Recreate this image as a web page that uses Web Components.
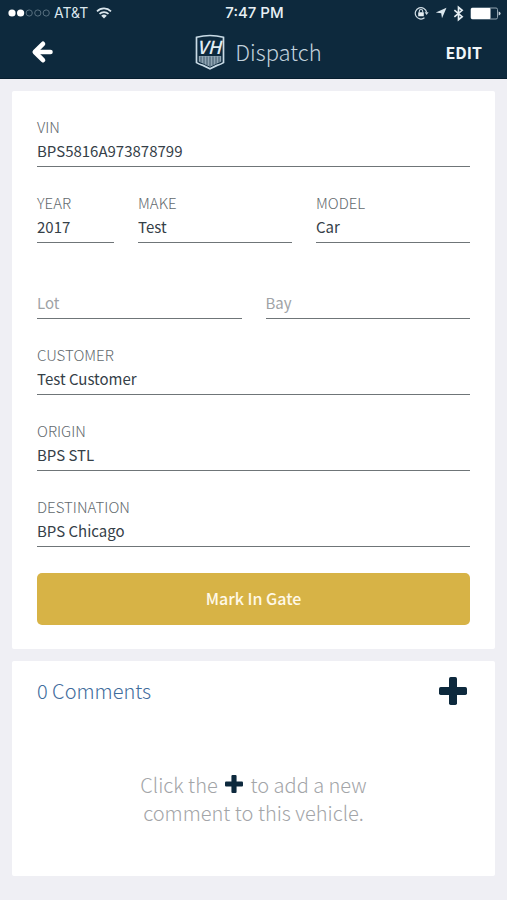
<!DOCTYPE html>
<html lang="en">
<head>
<meta charset="utf-8">
<meta name="viewport" content="width=device-width, initial-scale=1">
<title>Dispatch</title>
<style>
  html { background: #efeff4; }
  body {
    margin: 0;
    font-family: "Noto Sans CJK SC", "Noto Sans", sans-serif;
    --navy: #0d293d;
    --ink: #354048;
    --muted: #62696d;
    --gold: #d7b346;
  }
</style>
</head>
<body>
<dispatch-page></dispatch-page>

<template id="status-bar">
  <style>
    :host { display: grid; grid-template-columns: 1fr auto 1fr; align-items: center; height: 26px; padding: 0 6px 0 8px;
      font: 500 14px/26px Inter, "Liberation Sans", sans-serif; color: #dbe7ee; }
    .side { display: flex; align-items: center; gap: 4px; }
    .end { justify-content: flex-end; gap: 6px; }
    .carrier { font-size: 14px; font-weight: 400; }
    .time { font-size: 15px; font-weight: 500; color: #e8f0f5; }
    svg { display: block; }
  </style>
  <div class="side">
    <svg width="42" height="10" viewBox="0 0 42 10" aria-hidden="true">
      <g fill="#fff"><circle cx="4" cy="5" r="3.6"/><circle cx="12.6" cy="5" r="3.6"/></g>
      <g fill="none" stroke="#587080" stroke-width="1"><circle cx="21.2" cy="5" r="3.1"/><circle cx="29.8" cy="5" r="3.1"/><circle cx="38.2" cy="5" r="3.1"/></g>
    </svg>
    <span class="carrier">AT&amp;T</span>
    <svg width="24" height="12" viewBox="-4 0 24 12" fill="none" stroke="#dbe7ee" stroke-width="1.7" aria-hidden="true">
      <path d="M1 4.3a10 10 0 0 1 14 0M3.5 6.9a6.4 6.4 0 0 1 9 0"/><path fill="#dbe7ee" stroke="none" d="M8 11.6 5.2 8.8a4 4 0 0 1 5.6 0z"/>
    </svg>
  </div>
  <span class="time">7:47 PM</span>
  <div class="side end">
    <svg width="15" height="14" viewBox="0 0 15 14" fill="none" stroke="#cfdce4" aria-hidden="true">
      <path stroke-width="1.2" d="M10.5 11.8A5.7 5.7 0 1 1 12.6 6.4"/><path fill="#cfdce4" stroke="none" d="M10.6 6.2h4l-2 2.8z"/>
      <rect x="4.2" y="6.3" width="5.6" height="3.9" rx=".5" fill="#e6eef3" stroke="none"/><path stroke-width="1.1" d="M5.3 6.5V5.2a1.7 1.7 0 0 1 3.4 0v1.3"/>
    </svg>
    <svg width="12" height="12" viewBox="0 0 12 12" fill="#dbe7ee" aria-hidden="true"><path d="M11.5.8 7 11.2 6.2 6.2.8 5.6z"/></svg>
    <svg width="11" height="17" viewBox="0 0 12 17" fill="none" stroke="#e6eef3" stroke-width="1.8" aria-hidden="true"><path d="M1.5 4.8 10 12 6 15.3V1.7L10 5 1.5 12.2"/></svg>
    <svg width="31" height="13" viewBox="0 0 31 13" aria-hidden="true">
      <rect x="1" y="1" width="26.500" height="11" rx="1.500" fill="none" stroke="#93a5b1"/><rect x="1" y="1" width="19.500" height="11" rx="1" fill="#fff"/><path fill="#c9d5dc" d="M28.6 4.4q2 .6 2 2.1t-2 2.1z"/>
    </svg>
  </div>
</template>

<template id="team-crest">
  <style>
    :host { display: block; }
    svg { display: block; }
    text { font: italic 500 18px "Noto Sans CJK SC", "Noto Sans", sans-serif; }
  </style>
  <svg width="30" height="36" viewBox="0 0 30 36" role="img" aria-label="VH">
    <path d="M1.500 3.300Q15 -.3 28.500 3.300V28.600Q26 30.200 22 31.400L15 34.800 8 31.400Q4 30.200 1.500 28.600Z" fill="#0d293d" stroke="#c9dbe6" stroke-width="1.700"/>
    <path d="M3.800 22h22.400v5.500l-4.200 2.100L15 32.800 8 29.600 3.800 27.500z" fill="#8fa4b2"/>
    <path d="M6 22.500v6M9 22.500v7.500M12 22.500v9M15 22.500v10M18 22.500v9M21 22.500v7.500M24 22.500v6" stroke="#3c5669" stroke-width="1"/>
    <text x="14" y="20" text-anchor="middle" fill="#e2edf4">VH</text>
  </svg>
</template>

<template id="app-bar">
  <style>
    :host { display: block; background: var(--navy); border-bottom: 1px solid #061d2e; }
    header { display: grid; grid-template-columns: 1fr auto 1fr; align-items: center; height: 52px; padding: 0 25px 0 31px; }
    button { border: 0; padding: 0; background: none; color: #f0f5f8; font: inherit; cursor: pointer; }
    .back { justify-self: start; }
    .edit { justify-self: end; font-size: 16px; line-height: 24px; font-weight: 700; }
    .brand { display: flex; align-items: center; gap: 10px; padding-left: 4px; }
    h1 { margin: 0; padding-bottom: 2px; color: #c2d2dd; font-size: 22px; line-height: 32px; font-weight: 300; }
    svg { display: block; }
  </style>
  <status-bar></status-bar>
  <header>
    <button class="back" aria-label="Back"><svg width="23" height="24" viewBox="0 0 23 24" fill="none" stroke="#fff" stroke-width="4.600" stroke-linejoin="round" stroke-linecap="round"><path d="M12 3.800 3.800 12l8.200 8.200"/><path d="M5 12h14.500"/></svg></button>
    <div class="brand"><team-crest></team-crest><h1><slot></slot></h1></div>
    <button class="edit">EDIT</button>
  </header>
</template>

<template id="panel-card">
  <style>
    :host { display: block; background: #fff; border-radius: 2px; padding: 24px 25px; }
  </style>
  <slot></slot>
</template>

<template id="text-field">
  <style>
    :host { display: block; min-width: 0; }
    label { display: block; height: 24px; font-size: 15px; line-height: 24px; font-weight: 300; color: var(--muted); }
    input { display: block; box-sizing: border-box; width: 100%; height: 28px; margin: 0; padding: 0 0 4px; border: 0; border-bottom: 1px solid #6f7578;
      border-radius: 0; outline: 0; background: none; font: 400 15px/23px "Noto Sans CJK SC", "Noto Sans", sans-serif; color: var(--ink); }
    input::placeholder { color: #a0a3a6; opacity: 1; }
  </style>
  <label for="field"></label>
  <input id="field" type="text">
</template>

<template id="plus-icon">
  <style>
    :host { display: inline-block; width: 28px; height: 28px; }
    svg { display: block; width: 100%; height: 100%; }
  </style>
  <svg viewBox="0 0 28 28" fill="#0d293d" aria-hidden="true"><rect x="10" y="0" width="8" height="28" rx="1.700"/><rect x="0" y="10" width="28" height="8" rx="1.700"/></svg>
</template>

<template id="vehicle-form">
  <style>
    form { display: grid; gap: 24px; }
    .row { display: grid; gap: 24px; }
    .three { grid-template-columns: 1fr 2fr 2fr; }
    .two { grid-template-columns: 1fr 1fr; }
    button { height: 52px; margin: 2px 0 0; padding: 0 0 2px; border: 0; border-radius: 5px; background: var(--gold); color: #fff9e8;
      font: 500 16px/24px "Noto Sans CJK SC", "Noto Sans", sans-serif; cursor: pointer; }
  </style>
  <form>
    <text-field label="VIN" value="BPS5816A973878799"></text-field>
    <div class="row three">
      <text-field label="YEAR" value="2017"></text-field>
      <text-field label="MAKE" value="Test"></text-field>
      <text-field label="MODEL" value="Car"></text-field>
    </div>
    <div class="row two">
      <text-field placeholder="Lot"></text-field>
      <text-field placeholder="Bay"></text-field>
    </div>
    <text-field label="CUSTOMER" value="Test Customer"></text-field>
    <text-field label="ORIGIN" value="BPS STL"></text-field>
    <text-field label="DESTINATION" value="BPS Chicago"></text-field>
    <button type="button">Mark In Gate</button>
  </form>
</template>

<template id="comment-list">
  <style>
    :host { display: block; }
    .head { display: flex; align-items: center; justify-content: space-between; margin-top: -8px; padding-right: 3px; }
    h2 { margin: 0; font-size: 20px; line-height: 28px; font-weight: 300; color: #3f6c9c; }
    .add { border: 0; padding: 0; background: none; cursor: pointer; }
    .add plus-icon { display: block; }
    p { margin: 66px auto 25px; text-align: center; font-size: 20px; line-height: 28px; font-weight: 300; color: #a3a5a8; }
    p plus-icon { width: 18px; height: 18px; margin: 0 3px; }
  </style>
  <div class="head"><h2>0 Comments</h2><button class="add" aria-label="Add comment"><plus-icon></plus-icon></button></div>
  <p>Click the <plus-icon></plus-icon> to add a new<br>comment to this vehicle.</p>
</template>

<template id="dispatch-page">
  <style>
    :host { display: block; }
    main { display: grid; gap: 12px; padding: 12px; }
  </style>
  <app-bar>Dispatch</app-bar>
  <main>
    <panel-card><vehicle-form></vehicle-form></panel-card>
    <panel-card><comment-list></comment-list></panel-card>
  </main>
</template>

<script>
  class TemplateElement extends HTMLElement {
    constructor() {
      super();
      const template = document.getElementById(this.localName);
      this.attachShadow({ mode: "open" }).append(template.content.cloneNode(true));
    }
  }

  class TextField extends TemplateElement {
    connectedCallback() {
      const placeholder = this.getAttribute("placeholder") || "";
      const input = this.shadowRoot.querySelector("input");
      this.shadowRoot.querySelector("label").textContent = this.getAttribute("label") || "";
      input.value = this.getAttribute("value") || "";
      input.placeholder = placeholder;
      if (placeholder) input.setAttribute("aria-label", placeholder);
    }
  }

  for (const name of ["status-bar", "team-crest", "app-bar", "panel-card", "plus-icon", "vehicle-form", "comment-list", "dispatch-page"]) {
    customElements.define(name, class extends TemplateElement {});
  }
  customElements.define("text-field", TextField);
</script>
</body>
</html>
